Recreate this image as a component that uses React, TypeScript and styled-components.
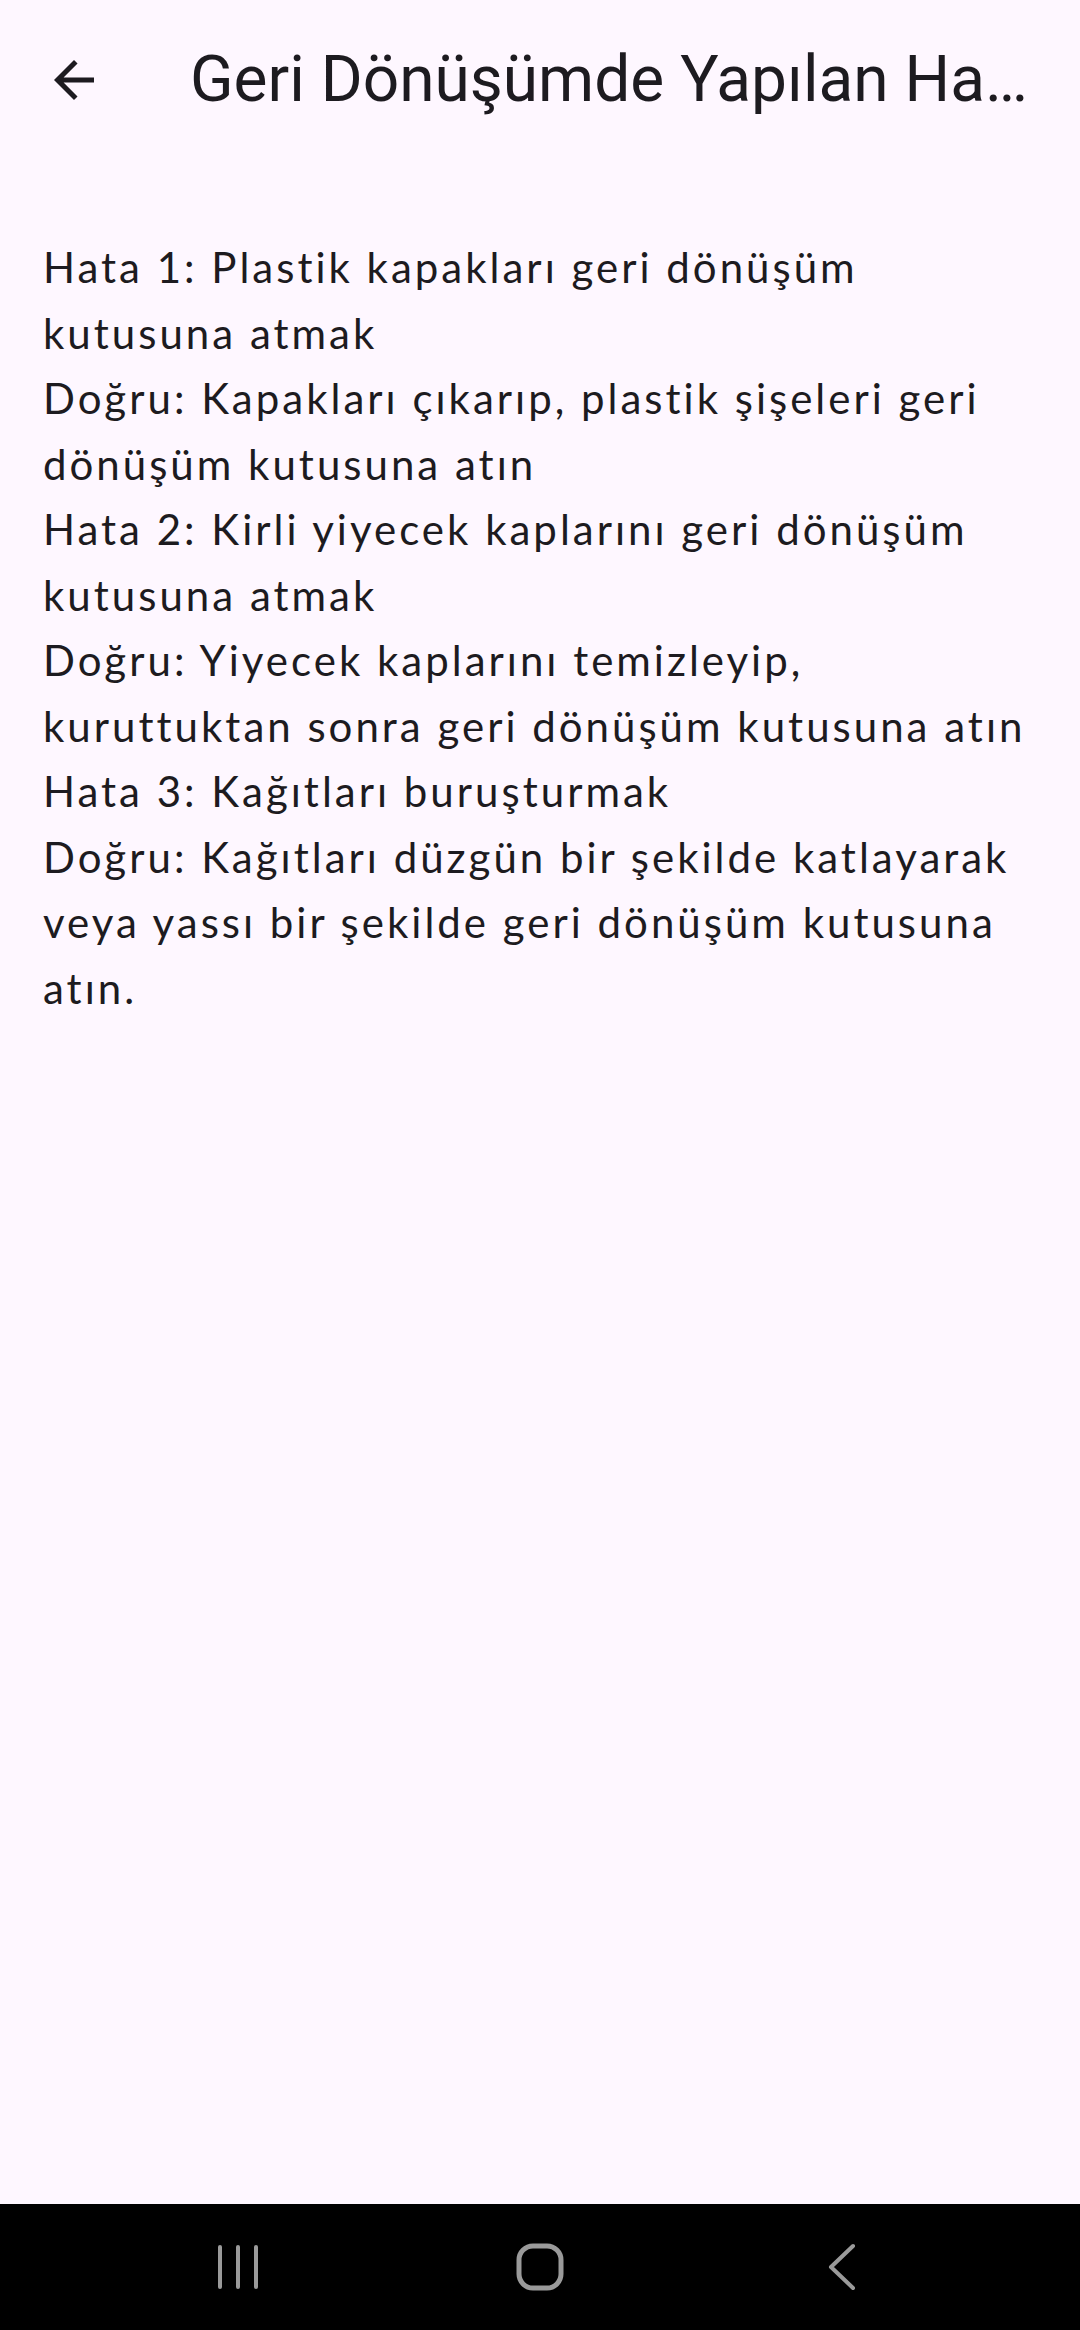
import React from "react";
import styled, { createGlobalStyle } from "styled-components";

const Global = createGlobalStyle`
  html, body { margin: 0; padding: 0; background: #fef7ff; }
  #root { min-height: 100vh; }
`;

const Screen = styled.div`
  width: 1080px;
  height: 2330px;
  display: flex;
  flex-direction: column;
  background: #fef7ff;
  overflow: hidden;
`;

const AppBar = styled.header`
  height: 160px;
  display: flex;
  align-items: center;
  padding: 0 48px 0 26px;
  flex-shrink: 0;
`;

const IconButton = styled.button`
  width: 96px;
  height: 96px;
  border: none;
  background: transparent;
  padding: 0;
  display: flex;
  align-items: center;
  justify-content: center;
  color: #1d1b20;
  flex-shrink: 0;
`;

const Title = styled.h1`
  margin: 0 0 0 68px;
  font-family: Roboto, "Noto Sans", sans-serif;
  font-weight: 400;
  font-size: 64px;
  line-height: 80px;
  color: #1d1b20;
  white-space: nowrap;
  overflow: hidden;
  text-overflow: ellipsis;
  min-width: 0;
  flex: 1;
`;

const Body = styled.main`
  flex: 1;
  padding: 75px 43px 0 43px;
`;

const Paragraph = styled.p`
  margin: 0;
  font-family: Lato, "Noto Sans", sans-serif;
  font-size: 42px;
  letter-spacing: 3px;
  line-height: 65.5px;
  color: #1d1b20;
`;

const NavBar = styled.nav`
  height: 126px;
  background: #000;
  display: flex;
  align-items: center;
  justify-content: center;
  gap: 222px;
  flex-shrink: 0;
`;

const NavIcon = styled.div`
  width: 80px;
  height: 60px;
  display: flex;
  align-items: center;
  justify-content: center;
  color: #9a9a9a;
`;

const lines = [
  "Hata 1: Plastik kapakları geri dönüşüm kutusuna atmak",
  "Doğru: Kapakları çıkarıp, plastik şişeleri geri dönüşüm kutusuna atın",
  "Hata 2: Kirli yiyecek kaplarını geri dönüşüm kutusuna atmak",
  "Doğru: Yiyecek kaplarını temizleyip, kuruttuktan sonra geri dönüşüm kutusuna atın",
  "Hata 3: Kağıtları buruşturmak",
  "Doğru: Kağıtları düzgün bir şekilde katlayarak veya yassı bir şekilde geri dönüşüm kutusuna atın.",
];

export default function App() {
  return (
    <>
      <Global />
      <Screen>
        <AppBar>
          <IconButton aria-label="Geri">
            <svg width="60" height="60" viewBox="0 0 24 24">
              <path
                d="M20 11H7.83l5.59-5.59L12 4l-8 8 8 8 1.41-1.41L7.83 13H20v-2z"
                fill="currentColor"
              />
            </svg>
          </IconButton>
          <Title>Geri Dönüşümde Yapılan Hatalar</Title>
        </AppBar>
        <Body>
          {lines.map((l) => (
            <Paragraph key={l}>{l}</Paragraph>
          ))}
        </Body>
        <NavBar>
          <NavIcon>
            <svg width="44" height="48" viewBox="0 0 44 48">
              <g stroke="currentColor" strokeWidth="4" strokeLinecap="round">
                <line x1="4" y1="4" x2="4" y2="44" />
                <line x1="22" y1="4" x2="22" y2="44" />
                <line x1="40" y1="4" x2="40" y2="44" />
              </g>
            </svg>
          </NavIcon>
          <NavIcon>
            <svg width="50" height="50" viewBox="0 0 50 50">
              <rect x="4" y="4" width="42" height="42" rx="14" fill="none" stroke="currentColor" strokeWidth="5" />
            </svg>
          </NavIcon>
          <NavIcon>
            <svg width="32" height="48" viewBox="0 0 32 48">
              <polyline points="27,3 5,24 27,45" fill="none" stroke="currentColor" strokeWidth="4" strokeLinecap="round" strokeLinejoin="round" />
            </svg>
          </NavIcon>
        </NavBar>
      </Screen>
    </>
  );
}
